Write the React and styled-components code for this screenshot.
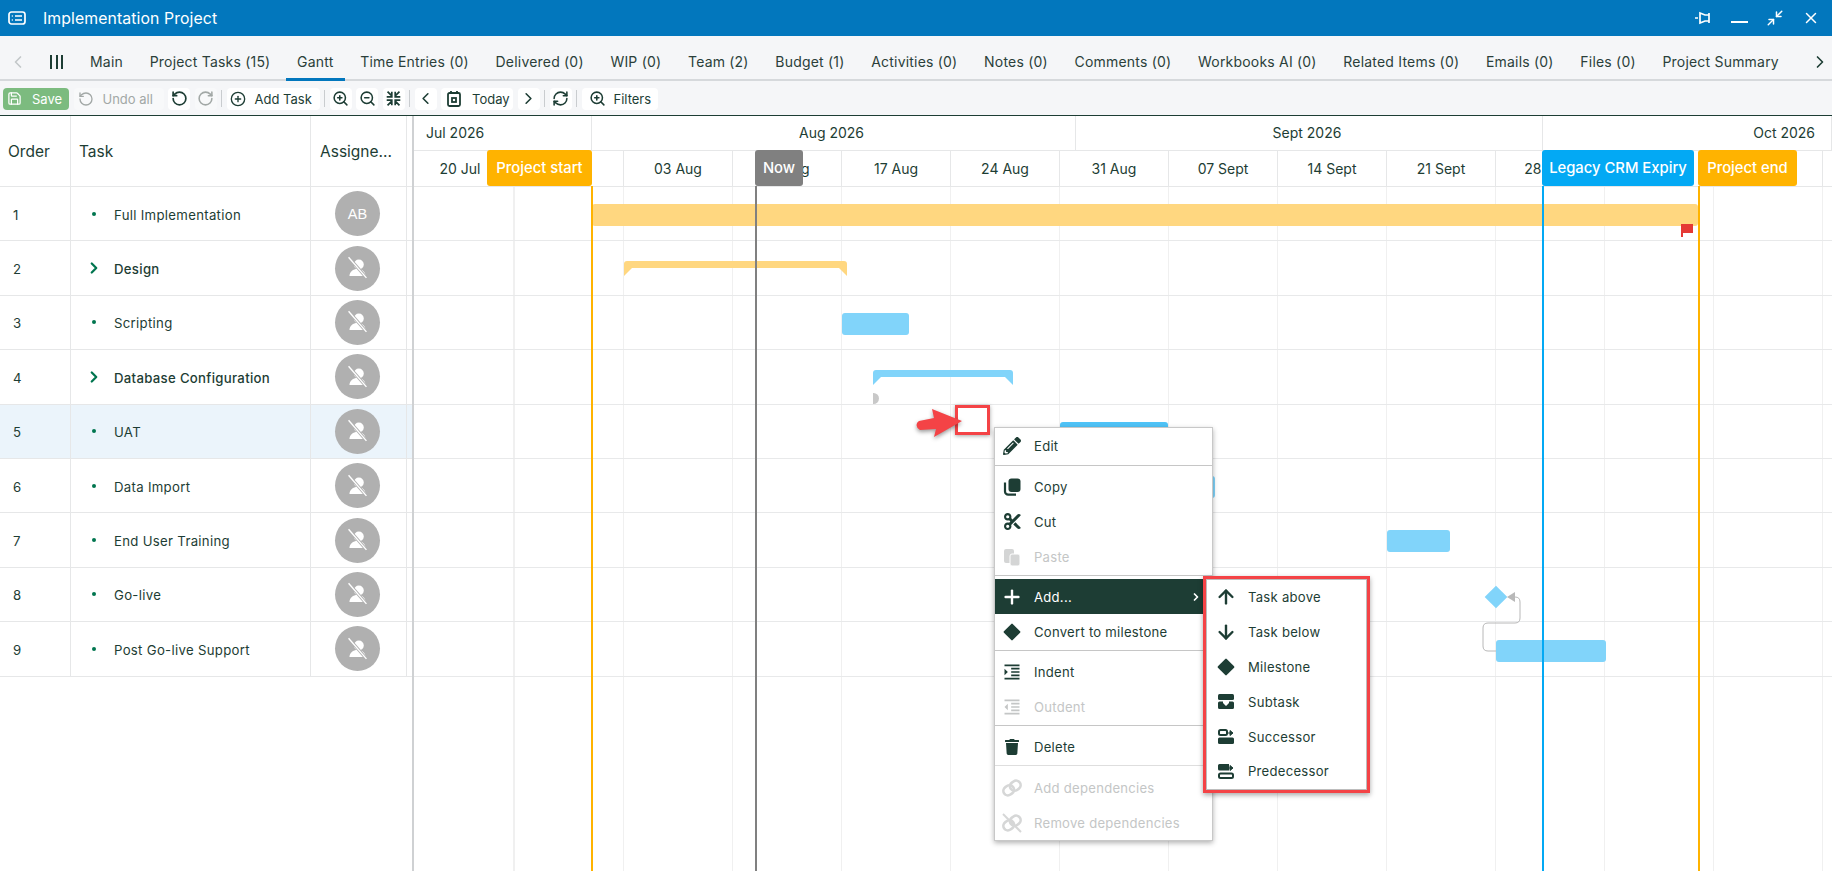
import React from "react";
import styled, { createGlobalStyle } from "styled-components";
import {
  ChevronLeft,
  ChevronRight,
  CirclePlus,
  Minimize2,
  Plus,
  RefreshCw,
  RotateCcw,
  RotateCw,
  Save,
  X,
  ZoomIn,
  ZoomOut,
  ArrowUp,
  ArrowDown,
} from "lucide-react";
import { FaPencilAlt, FaTrash } from "react-icons/fa";
import { FaScissors } from "react-icons/fa6";
import { MdFormatIndentIncrease, MdFormatIndentDecrease } from "react-icons/md";

const INK = "#1d3d34";
const CHART_X = 414;
const BODY_Y = 187;

const GlobalStyle = createGlobalStyle`
  html, body { margin: 0; padding: 0; height: 100%; background: #fff; }
  body { font-family: Inter, "Open Sans", "Liberation Sans", sans-serif; color: ${INK}; }
  * { box-sizing: border-box; }
`;

const Page = styled.div`
  display: flex;
  flex-direction: column;
  width: 100vw;
  height: 100vh;
  overflow: hidden;
`;

const TitleBar = styled.div`
  display: flex;
  align-items: center;
  height: 36px;
  padding: 0 12px 0 8px;
  background: #0277bd;
  color: #fff;
`;
const Title = styled.div`
  margin-left: 17px;
  font-size: 15.8px;
  letter-spacing: 0.1px;
  flex: 1;
`;
const WindowIcons = styled.div`
  display: flex;
  align-items: center;
  gap: 18px;
`;

const TabBar = styled.div`
  display: flex;
  align-items: stretch;
  height: 45px;
  background: #f5f6f8;
  border-bottom: 2px solid #d6d9dc;
  padding-left: 8px;
`;
const Tabs = styled.div`
  display: flex;
  gap: 4.7px;
  margin-left: 16px;
`;
const Tab = styled.div`
  display: flex;
  align-items: center;
  padding: 8px 11px 0;
  margin-bottom: -2px;
  font-size: 14px;
  letter-spacing: 0.2px;
  white-space: nowrap;
  color: #2b3f3a;
  border-bottom: 3px solid ${(p) => (p.$active ? "#0277bd" : "transparent")};
`;
const NavIcon = styled.div`
  display: flex;
  align-items: center;
  padding-top: 8px;
  color: ${(p) => p.$color || INK};
  margin-left: ${(p) => p.$left || "0"};
`;
const ColumnsGlyph = styled.div`
  display: flex;
  gap: 3.5px;
  margin-left: 22px;
  padding-top: 8px;
  align-items: center;
  span {
    width: 2px;
    height: 14px;
    background: ${INK};
  }
`;

const Toolbar = styled.div`
  display: flex;
  align-items: center;
  height: 35px;
  padding: 1px 3px 0;
  background: #f5f6f8;
  border-bottom: 1px solid ${INK};
  gap: 4.5px;
`;
const ToolButton = styled.div`
  display: flex;
  align-items: center;
  justify-content: center;
  height: 22px;
  width: 22px;
  border-radius: 4px;
  background: ${(p) => (p.$disabled ? "#f8f9fa" : "#fff")};
  color: ${(p) => (p.$disabled ? "#a2a8a6" : INK)};
`;
const TextButton = styled(ToolButton)`
  justify-content: flex-start;
  gap: ${(p) => p.$gap || "9px"};
  width: ${(p) => p.$width};
  padding-left: ${(p) => p.$pad || "4px"};
  font-size: 13px;
  white-space: nowrap;
`;
const SaveButton = styled(TextButton)`
  background: #7cbb7f;
  color: #fff;
`;
const ToolSep = styled.div`
  width: 1px;
  height: 17px;
  background: #c9cccf;
`;

const Main = styled.div`
  display: flex;
  flex: 1;
  min-height: 0;
`;

const TaskTable = styled.div`
  width: 414px;
  flex: none;
  border-right: 2px solid #cfd1d3;
`;
const TableRow = styled.div`
  display: grid;
  grid-template-columns: 71px 240px 96px;
  height: ${(p) => (p.$head ? "71px" : "54.4px")};
  border-bottom: 1px solid #e6e7e8;
  background: ${(p) => (p.$selected ? "#ebf4fb" : "transparent")};
`;
const Cell = styled.div`
  display: flex;
  align-items: center;
  min-width: 0;
  border-right: 1px solid #e6e7e8;
  padding-left: ${(p) => p.$pad || "0"};
  font-size: ${(p) => (p.$head ? "15.5px" : "13.2px")};
  letter-spacing: ${(p) => (p.$head ? "0" : "0.3px")};
  font-weight: ${(p) => (p.$bold ? 500 : 400)};
  color: ${INK};
  white-space: nowrap;
`;
const AvatarCell = styled(Cell)`
  justify-content: center;
  padding-right: 2px;
`;
const TaskLabel = styled.span`
  padding-top: 2px;
`;
const TreeMark = styled.div`
  display: flex;
  align-items: center;
  justify-content: center;
  width: 10px;
  margin-right: 15px;
  color: #00754f;
  svg {
    flex: none;
  }
`;
const Bullet = styled.div`
  width: 4px;
  height: 4px;
  border-radius: 50%;
  background: #00754f;
`;
const Avatar = styled.div`
  display: flex;
  align-items: center;
  justify-content: center;
  width: 45px;
  height: 45px;
  border-radius: 50%;
  background: #b0b0b0;
  color: #fff;
  font-family: "Liberation Sans", sans-serif;
  font-size: 14.5px;
  letter-spacing: 0;
`;

const Chart = styled.div`
  position: relative;
  display: flex;
  flex-direction: column;
  flex: 1;
  min-width: 0;
  overflow: hidden;
`;
const MonthRow = styled.div`
  display: flex;
  height: 35px;
  flex: none;
  border-bottom: 1px solid #e6e7e8;
`;
const Month = styled.div`
  display: flex;
  align-items: center;
  width: ${(p) => p.$width};
  flex: ${(p) => (p.$width ? "none" : "1")};
  justify-content: ${(p) => p.$justify || "center"};
  padding: 0 16px 2px 12px;
  border-right: 1px solid #e6e7e8;
  font-size: 14px;
`;
const WeekRow = styled.div`
  display: flex;
  height: 36px;
  flex: none;
  margin-left: -8px;
  border-bottom: 1px solid #e6e7e8;
`;
const Week = styled.div`
  display: flex;
  align-items: center;
  justify-content: center;
  width: 109px;
  flex: none;
  border-right: 1px solid #e6e7e8;
  font-size: 14px;
  white-space: nowrap;
`;
const ChartBody = styled.div`
  position: relative;
  flex: 1;
  background: repeating-linear-gradient(
    to right,
    #f0f0f0 0,
    #f0f0f0 1px,
    transparent 1px,
    transparent 109px
  ) 100px 0;
`;
const ChartLine = styled.div`
  height: 54.4px;
  border-bottom: 1px solid #e8e9ea;
`;

const Bar = styled.div.attrs((p) => ({
  style: { left: p.$x - CHART_X, top: p.$y - BODY_Y, width: p.$w },
}))`
  position: absolute;
  height: 22px;
  border-radius: 3px;
  background: ${(p) => p.$color};
`;
const SummaryBar = styled.div.attrs((p) => ({
  style: { left: p.$x - CHART_X, top: p.$y - BODY_Y, width: p.$w },
}))`
  position: absolute;
  height: 7px;
  border-radius: 3px 3px 0 0;
  background: ${(p) => p.$color};
  &::before,
  &::after {
    content: "";
    position: absolute;
    top: 7px;
    border-top: 8px solid ${(p) => p.$color};
  }
  &::before {
    left: 0;
    border-right: 8px solid transparent;
  }
  &::after {
    right: 0;
    border-left: 8px solid transparent;
  }
`;
const Diamond = styled.div`
  position: absolute;
  left: ${1496 - CHART_X - 8}px;
  top: ${597 - BODY_Y - 8}px;
  width: 16px;
  height: 16px;
  background: #81d4fa;
  transform: rotate(45deg);
`;
const HalfDot = styled.div`
  position: absolute;
  left: ${873 - CHART_X}px;
  top: ${393 - BODY_Y}px;
  width: 6px;
  height: 11px;
  border-radius: 0 6px 6px 0;
  background: #c8c8c8;
`;
const Drawing = styled.svg`
  position: absolute;
  left: ${(p) => p.$x - CHART_X}px;
  top: ${(p) => p.$y - BODY_Y}px;
  overflow: visible;
`;
const ArrowDrawing = styled(Drawing)`
  filter: drop-shadow(0 2px 2px rgba(0, 0, 0, 0.4));
`;
const Callout = styled.div`
  position: absolute;
  left: ${955 - CHART_X}px;
  top: ${405 - BODY_Y}px;
  width: 35px;
  height: 30px;
  border: 3px solid #f44346;
  box-shadow: 0 1px 4px rgba(0, 0, 0, 0.35);
`;

const MarkerLine = styled.div`
  position: absolute;
  left: ${(p) => p.$x - CHART_X}px;
  top: 70px;
  bottom: 0;
  width: 2px;
  background: ${(p) => p.$color};
`;
const MarkerLabel = styled.div`
  position: absolute;
  display: flex;
  align-items: center;
  justify-content: center;
  left: ${(p) => p.$x - CHART_X}px;
  top: 34px;
  width: ${(p) => p.$w}px;
  height: 36px;
  border-radius: 3px;
  background: ${(p) => p.$color};
  color: #fff;
  font-size: 14.8px;
  font-weight: 500;
  white-space: nowrap;
`;

const Menu = styled.div`
  position: absolute;
  left: ${994 - CHART_X}px;
  top: ${427 - 116}px;
  width: 219px;
  background: #fff;
  border: 1px solid #c8c8c8;
  box-shadow: 0 2px 5px rgba(0, 0, 0, 0.3);
  z-index: 5;
`;
const MenuItem = styled.div`
  display: flex;
  align-items: center;
  height: ${(p) => p.$height || "35px"};
  padding-left: 8px;
  font-size: 13.1px;
  letter-spacing: 0.26px;
  white-space: nowrap;
  background: ${(p) => (p.$active ? INK : "transparent")};
  color: ${(p) => (p.$active ? "#fff" : p.$disabled ? "#c4c6c6" : INK)};
`;
const MenuIcon = styled.div`
  display: flex;
  align-items: center;
  justify-content: center;
  width: 18px;
  height: 18px;
  margin-right: 13px;
  flex: none;
  svg {
    flex: none;
  }
`;
const MenuArrow = styled.div`
  display: flex;
  margin-left: auto;
  margin-right: 10px;
`;
const MenuDivider = styled.div`
  height: 1px;
  margin: 1px 0 3px;
  background: #c6c6c6;
`;
const LastDivider = styled(MenuDivider)`
  margin-bottom: 4px;
  background: #dedede;
`;
const SubMenu = styled.div`
  position: absolute;
  left: 208px;
  top: 148px;
  width: 167px;
  background: #fff;
  border: 3px solid #f44346;
  box-shadow: 0 2px 5px rgba(0, 0, 0, 0.35);
`;
const SubMenuInner = styled.div`
  border: 1px solid #bdbdbd;
`;
const SubItem = styled.div`
  display: flex;
  align-items: center;
  height: 34.8px;
  padding-left: 10px;
  font-size: 13.1px;
  letter-spacing: 0.26px;
  white-space: nowrap;
  color: ${INK};
`;

const ListIcon = () => (
  <svg width="18" height="16" viewBox="0 0 18 16" fill="none" stroke="#fff" strokeWidth="1.7">
    <rect x="1" y="2" width="16" height="12" rx="2.5" />
    <path d="M7 6h7M7 10h7M3.8 6h1M3.8 10h1" />
  </svg>
);
const PinIcon = () => (
  <svg width="18" height="16" viewBox="0 0 18 16" fill="none" stroke="#fff" strokeWidth="1.7">
    <path d="M0 8h3M5 3l5 2h4v6h-4l-5 2zM14 3v10" />
  </svg>
);
const MinimizeIcon = () => (
  <svg width="17" height="16" viewBox="0 0 17 16">
    <rect x="0" y="11" width="17" height="2" fill="#fff" />
  </svg>
);
const FitIcon = () => (
  <svg width="17" height="17" viewBox="0 0 20 20" fill="none" stroke={INK} strokeWidth="2">
    <path d="M3 2l5 5M8 2v6H2M17 2l-5 5M12 2v6h6M3 18l5-5M8 18v-6H2M17 18l-5-5M12 18v-6h6" />
  </svg>
);
const TodayIcon = () => (
  <svg width="16" height="18" viewBox="0 0 16 18" fill="none" stroke={INK} strokeWidth="1.8">
    <rect x="2" y="3" width="12" height="13" rx="1.5" />
    <rect x="6" y="8" width="4" height="4" />
    <path d="M5 1v3M11 1v3" />
  </svg>
);
const NoUserIcon = () => (
  <svg width="25" height="24" viewBox="0 0 28 26">
    <circle cx="15.5" cy="9" r="5.5" fill="#fff" />
    <path d="M5 22c0-5 4-8 9-8s9 3 9 8z" fill="#fff" />
    <path d="M4 1l20 23" stroke="#b0b0b0" strokeWidth="3.5" />
    <path d="M4 1l20 23" stroke="#fff" strokeWidth="1.5" />
  </svg>
);
const DiamondIcon = () => (
  <svg width="18" height="18" viewBox="0 0 18 18">
    <rect x="2.8" y="2.8" width="12.4" height="12.4" rx="1" transform="rotate(45 9 9)" fill={INK} />
  </svg>
);
const CopyIcon = () => (
  <svg width="18" height="18" viewBox="0 0 18 18" fill="none">
    <rect x="5.5" y="0.5" width="12" height="13.5" rx="3" fill={INK} />
    <path d="M2 4.5V13.5a3.2 3.2 0 0 0 3.2 3.2H13" stroke={INK} strokeWidth="2.2" />
  </svg>
);
const PasteIcon = () => (
  <svg width="18" height="18" viewBox="0 0 18 18" fill="#d4d5d5">
    <rect x="1" y="1" width="10" height="14" rx="2" />
    <rect x="7" y="6" width="10" height="12" rx="2" stroke="#fff" />
  </svg>
);
const SubtaskIcon = () => (
  <svg width="16" height="15" viewBox="0 0 16 15" fill={INK}>
    <rect x="0" y="0" width="16" height="6" rx="1.5" />
    <path d="M0 9a1.5 1.5 0 0 1 1.5-1.5H5V9l3 3 3-3V7.5h3.5A1.5 1.5 0 0 1 16 9v4.5a1.5 1.5 0 0 1-1.5 1.5h-13A1.5 1.5 0 0 1 0 13.5z" />
  </svg>
);
const SuccessorIcon = () => (
  <svg width="16" height="15" viewBox="0 0 16 15">
    <rect x="1" y="1" width="8" height="5" rx="1.5" fill="none" stroke={INK} strokeWidth="2" />
    <path d="M10 4h3M12 1.5l3 2.5-3 2.5z" stroke={INK} fill={INK} strokeWidth="1" />
    <rect x="0" y="8.5" width="16" height="6.5" rx="1.5" fill={INK} />
  </svg>
);
const PredecessorIcon = () => (
  <svg width="16" height="15" viewBox="0 0 16 15">
    <path d="M1.5 0H11v6.5H1.5A1.5 1.5 0 0 1 0 5V1.5A1.5 1.5 0 0 1 1.5 0z" fill={INK} />
    <path d="M10 4h3M12 1.5l3 2.5-3 2.5z" stroke={INK} fill={INK} strokeWidth="1" />
    <rect x="1" y="9.5" width="14" height="4.5" rx="1.5" fill="none" stroke={INK} strokeWidth="2" />
  </svg>
);
const LinkIcon = ({ off }) => (
  <svg width="20" height="20" viewBox="0 0 20 20" fill="none" stroke="#d6d7d7" strokeWidth="2.6">
    <g transform="rotate(-35 10 10)">
      <rect x="0.5" y="5.5" width="11" height="9" rx="4.5" />
      <rect x="8.5" y="5.5" width="11" height="9" rx="4.5" />
    </g>
    {off && <path d="M1 1l18 18" strokeWidth="2" />}
  </svg>
);

const tabs = [
  "Main",
  "Project Tasks (15)",
  "Gantt",
  "Time Entries (0)",
  "Delivered (0)",
  "WIP (0)",
  "Team (2)",
  "Budget (1)",
  "Activities (0)",
  "Notes (0)",
  "Comments (0)",
  "Workbooks AI (0)",
  "Related Items (0)",
  "Emails (0)",
  "Files (0)",
  "Project Summary",
];

const tasks = [
  { name: "Full Implementation", initials: "AB" },
  { name: "Design", group: true },
  { name: "Scripting" },
  { name: "Database Configuration", group: true },
  { name: "UAT", selected: true },
  { name: "Data Import" },
  { name: "End User Training" },
  { name: "Go-live" },
  { name: "Post Go-live Support" },
];

const weeks = [
  "20 Jul", "27 Jul", "03 Aug", "10 Aug", "17 Aug", "24 Aug", "31 Aug", "07 Sept",
  "14 Sept", "21 Sept", "28 Sept", "05 Oct", "12 Oct",
];

const subItems = [
  { label: "Task above", icon: <ArrowUp size={22} strokeWidth={2.6} /> },
  { label: "Task below", icon: <ArrowDown size={22} strokeWidth={2.6} /> },
  { label: "Milestone", icon: <DiamondIcon /> },
  { label: "Subtask", icon: <SubtaskIcon /> },
  { label: "Successor", icon: <SuccessorIcon /> },
  { label: "Predecessor", icon: <PredecessorIcon /> },
];

const App = () => {
  return (
    <Page>
      <GlobalStyle />
      <TitleBar>
        <ListIcon />
        <Title>Implementation Project</Title>
        <WindowIcons>
          <PinIcon />
          <MinimizeIcon />
          <Minimize2 size={18} color="#fff" strokeWidth={2} />
          <X size={18} color="#fff" strokeWidth={2} />
        </WindowIcons>
      </TitleBar>

      <TabBar>
        <NavIcon $color="#c3c7c9">
          <ChevronLeft size={20} />
        </NavIcon>
        <ColumnsGlyph>
          <span />
          <span />
          <span />
        </ColumnsGlyph>
        <Tabs>
          {tabs.map((t) => (
            <Tab key={t} $active={t === "Gantt"}>
              {t}
            </Tab>
          ))}
        </Tabs>
        <NavIcon $left="20px">
          <ChevronRight size={20} />
        </NavIcon>
      </TabBar>

      <Toolbar>
        <SaveButton $width="66px" $gap="10px">
          <Save size={15} />
          Save
        </SaveButton>
        <TextButton $disabled $width="90px">
          <RotateCcw size={16} />
          Undo all
        </TextButton>
        <ToolButton>
          <RotateCcw size={17} strokeWidth={2.4} />
        </ToolButton>
        <ToolButton $disabled>
          <RotateCw size={17} strokeWidth={2.2} />
        </ToolButton>
        <ToolSep />
        <TextButton $width="93px" $pad="3px">
          <CirclePlus size={16} />
          Add Task
        </TextButton>
        <ToolSep />
        <ToolButton>
          <ZoomIn size={17} strokeWidth={2.2} />
        </ToolButton>
        <ToolButton>
          <ZoomOut size={17} strokeWidth={2.2} />
        </ToolButton>
        <ToolButton>
          <FitIcon />
        </ToolButton>
        <ToolSep />
        <ToolButton>
          <ChevronLeft size={19} />
        </ToolButton>
        <TextButton $width="72px" $pad="5px" $gap="10px">
          <TodayIcon />
          Today
        </TextButton>
        <ToolButton>
          <ChevronRight size={19} />
        </ToolButton>
        <ToolSep />
        <ToolButton>
          <RefreshCw size={17} strokeWidth={2.2} />
        </ToolButton>
        <ToolSep />
        <TextButton $width="76px" $pad="7px" $gap="8px">
          <ZoomIn size={17} strokeWidth={2.2} />
          Filters
        </TextButton>
      </Toolbar>

      <Main>
        <TaskTable>
          <TableRow $head>
            <Cell $head $pad="8px">Order</Cell>
            <Cell $head $pad="8px">Task</Cell>
            <Cell $head $pad="9px">Assigne...</Cell>
          </TableRow>
          {tasks.map((task, i) => (
            <TableRow key={task.name} $selected={task.selected}>
              <Cell $pad="13px">
                <TaskLabel>{i + 1}</TaskLabel>
              </Cell>
              <Cell $pad="18px" $bold={task.group}>
                <TreeMark>
                  {task.group ? <ChevronRight size={18} strokeWidth={3} /> : <Bullet />}
                </TreeMark>
                <TaskLabel>{task.name}</TaskLabel>
              </Cell>
              <AvatarCell>
                <Avatar>{task.initials || <NoUserIcon />}</Avatar>
              </AvatarCell>
            </TableRow>
          ))}
        </TaskTable>

        <Chart>
          <MonthRow>
            <Month $width="178px" $justify="flex-start">Jul 2026</Month>
            <Month $width="484px">Aug 2026</Month>
            <Month $width="467px">Sept 2026</Month>
            <Month $justify="flex-end">Oct 2026</Month>
          </MonthRow>
          <WeekRow>
            {weeks.map((w) => (
              <Week key={w}>{w}</Week>
            ))}
          </WeekRow>
          <ChartBody>
            {tasks.map((task) => (
              <ChartLine key={task.name} />
            ))}
            <Bar $x={592} $y={204} $w={1106} $color="#ffd780" />
            <SummaryBar $x={624} $y={261} $w={223} $color="#ffd780" />
            <Bar $x={842} $y={313} $w={67} $color="#81d4fa" />
            <SummaryBar $x={873} $y={370} $w={140} $color="#81d4fa" />
            <HalfDot />
            <Bar $x={1060} $y={422} $w={108} $color="#4fc3f7" />
            <Bar $x={1168} $y={476} $w={47} $color="#81d4fa" />
            <Bar $x={1387} $y={530} $w={63} $color="#81d4fa" />
            <Diamond />
            <Bar $x={1496} $y={640} $w={110} $color="#81d4fa" />
            <Drawing $x={1480} $y={590} width="45" height="65" viewBox="0 0 45 65" fill="none">
              <path d="M16 61H8Q3 61 3 56V38Q3 33 8 33H35Q40 33 40 28V12Q40 7 35 7" stroke="#b8b8b8" />
              <path d="M27 7l8-5v10z" fill="#b8b8b8" />
            </Drawing>
            <Drawing $x={1680} $y={223} width="14" height="14" viewBox="0 0 14 14" fill="#e53935">
              <path d="M1 1h12v9H3v4H1z" />
            </Drawing>
            <Callout />
            <ArrowDrawing $x={914} $y={408} width="50" height="30" viewBox="0 0 50 30">
              <path d="M18 1L48 13 20 29 22 21 6 22A5 5 0 0 1 5 13L20 10z" fill="#f44346" />
            </ArrowDrawing>
          </ChartBody>

          <MarkerLine $x={591} $color="#ffb300" />
          <MarkerLabel $x={487} $w={105} $color="#ffb300">Project start</MarkerLabel>
          <MarkerLine $x={755} $color="#808080" />
          <MarkerLabel $x={755} $w={48} $color="#808080">Now</MarkerLabel>
          <MarkerLine $x={1542} $color="#03a9f4" />
          <MarkerLabel $x={1542} $w={152} $color="#03a9f4">Legacy CRM Expiry</MarkerLabel>
          <MarkerLine $x={1698} $color="#ffb300" />
          <MarkerLabel $x={1698} $w={99} $color="#ffb300">Project end</MarkerLabel>

          <Menu>
            <MenuItem $height="36px">
              <MenuIcon><FaPencilAlt size={18} /></MenuIcon>Edit
            </MenuItem>
            <MenuDivider />
            <MenuItem>
              <MenuIcon><CopyIcon /></MenuIcon>Copy
            </MenuItem>
            <MenuItem>
              <MenuIcon><FaScissors size={17} /></MenuIcon>Cut
            </MenuItem>
            <MenuItem $disabled>
              <MenuIcon><PasteIcon /></MenuIcon>Paste
            </MenuItem>
            <MenuDivider />
            <MenuItem $active>
              <MenuIcon><Plus size={22} strokeWidth={2.6} /></MenuIcon>Add...
              <MenuArrow><ChevronRight size={12} strokeWidth={3.5} /></MenuArrow>
            </MenuItem>
            <MenuItem>
              <MenuIcon><DiamondIcon /></MenuIcon>Convert to milestone
            </MenuItem>
            <MenuDivider />
            <MenuItem>
              <MenuIcon><MdFormatIndentIncrease size={20} /></MenuIcon>Indent
            </MenuItem>
            <MenuItem $disabled>
              <MenuIcon><MdFormatIndentDecrease size={20} /></MenuIcon>Outdent
            </MenuItem>
            <MenuDivider />
            <MenuItem>
              <MenuIcon><FaTrash size={16} /></MenuIcon>Delete
            </MenuItem>
            <LastDivider />
            <MenuItem $disabled>
              <MenuIcon><LinkIcon /></MenuIcon>Add dependencies
            </MenuItem>
            <MenuItem $disabled>
              <MenuIcon><LinkIcon off /></MenuIcon>Remove dependencies
            </MenuItem>

            <SubMenu>
              <SubMenuInner>
                {subItems.map((s) => (
                  <SubItem key={s.label}>
                    <MenuIcon>{s.icon}</MenuIcon>
                    {s.label}
                  </SubItem>
                ))}
              </SubMenuInner>
            </SubMenu>
          </Menu>
        </Chart>
      </Main>
    </Page>
  );
};

export default App;
